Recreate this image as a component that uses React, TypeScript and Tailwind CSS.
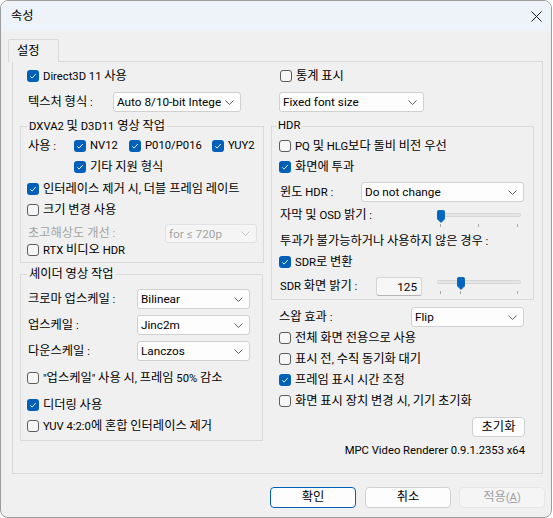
import React from "react";

// Hangul runs get their own size: the Latin face is set smaller than the Korean one
function T({ children }: { children: string }) {
  const parts = children.split(/([\u1100-\u11ff\u3131-\u318e\uac00-\ud7a3]+)/);
  return (
    <>
      {parts.map((p, i) =>
        i % 2 === 1 ? (
          <span key={i} className="text-[12.25px]">
            {p}
          </span>
        ) : (
          p
        )
      )}
    </>
  );
}

type CheckProps = { on?: boolean; label: string; className?: string };

function Box({ on }: { on?: boolean }) {
  if (on) {
    return (
      <span className="flex h-[12px] w-[12px] shrink-0 items-center justify-center rounded-[3px] bg-[#005fb8]">
        <svg width="8" height="8" viewBox="0 0 8 8">
          <path d="M1.3 4.3 3.1 6.1 6.8 2" fill="none" stroke="#fff" strokeWidth="0.9" />
        </svg>
      </span>
    );
  }
  return <span className="h-[12px] w-[12px] shrink-0 rounded-[3px] border border-[#5c5c5c] bg-[#f6f6f6]" />;
}

function CheckRow({ on, label, className = "" }: CheckProps) {
  return (
    <div className={`flex items-center gap-[4px] whitespace-nowrap ${className}`}>
      <Box on={on} />
      <span>
        <T>{label}</T>
      </span>
    </div>
  );
}

function Chevron({ color = "#5f5f5f" }: { color?: string }) {
  return (
    <svg width="9" height="5" viewBox="0 0 9 5" className="shrink-0">
      <path d="M0.5 0.5 4.5 4.5 8.5 0.5" fill="none" stroke={color} strokeWidth="1" />
    </svg>
  );
}

function Select({
  value,
  className = "",
  disabled,
}: {
  value: string;
  className?: string;
  disabled?: boolean;
}) {
  return (
    <div
      className={`flex items-center rounded-[3px] border pl-[3px] pr-[3px] ${
        disabled
          ? "border-[#e2e2e2] bg-[#f5f5f5] text-[#a3a3a3]"
          : "border-[#d0d0d0] bg-[#fdfdfd]"
      } ${className}`}
    >
      <span className="mr-[1px] min-w-0 flex-1 overflow-hidden whitespace-nowrap text-[11.75px]">{value}</span>
      <span className="flex w-[15px] shrink-0 justify-center">
        <Chevron color={disabled ? "#c2c2c2" : "#5f5f5f"} />
      </span>
    </div>
  );
}

function Slider({ pos, ticks }: { pos: number; ticks: number[] }) {
  return (
    <svg width="85" height="18" viewBox="0 0 85 18" className="shrink-0">
      <rect x="0.5" y="3.5" width="83" height="3" rx="1" fill="#e6e6e6" stroke="#d6d6d6" />
      <path
        d={`M${pos + 0.5} 1.5 Q${pos + 0.5} 0.5 ${pos + 1.5} 0.5 H${pos + 6.5} Q${pos + 7.5} 0.5 ${pos + 7.5} 1.5 V9 L${pos + 4} 12.5 L${pos + 0.5} 9 Z`}
        fill="#0067c0"
        stroke="#0058a8"
        strokeWidth="0.8"
      />
      {ticks.map((t) => (
        <rect key={t} x={t} y="14" width="1" height="3" fill="#a6a6a6" />
      ))}
    </svg>
  );
}

function Legend({ children, className = "" }: { children: string; className?: string }) {
  return (
    <legend className={`h-[14px] whitespace-nowrap leading-[14px] ${className}`}>
      <T>{children}</T>
    </legend>
  );
}

function Label({ children, className = "" }: { children: string; className?: string }) {
  return (
    <span className={`whitespace-nowrap ${className}`}>
      <T>{children}</T>
    </span>
  );
}

function Button({
  children,
  className = "",
}: {
  children: React.ReactNode;
  className?: string;
}) {
  return (
    <div className={`flex items-center justify-center rounded-[4px] border ${className}`}>{children}</div>
  );
}

export default function App() {
  return (
    <div className="h-[518px] w-[553px] bg-white text-[11.25px] leading-[16px] text-black [font-family:Roboto,'Noto_Sans_CJK_KR',sans-serif]">
      <div className="flex h-[518px] w-[552px] flex-col overflow-hidden rounded-[8px] border border-[#9c9c9c] bg-[#f0f0f0]">
        {/* title bar */}
        <div className="flex h-[30px] shrink-0 items-center justify-between bg-[#eef3f9] pl-[10px] pr-[9px]">
          <Label>속성</Label>
          <svg width="11" height="11" viewBox="0 0 11 11">
            <path d="M0.5 0.5 10.5 10.5 M10.5 0.5 0.5 10.5" stroke="#1a1a1a" strokeWidth="1" />
          </svg>
        </div>

        {/* tab header */}
        <div className="mt-[8px] flex pl-[7px]">
          <div className="relative z-10 -mb-[1px] flex h-[23px] w-[51px] items-center rounded-t-[2px] border border-b-0 border-[#d9d9d9] bg-[#f0f0f0] pl-[8px]">
            <Label>설정</Label>
          </div>
        </div>

        {/* tab panel */}
        <div className="ml-[11px] flex h-[413px] w-[531px] gap-[8px] border border-[#d9d9d9] pl-[7px] pt-[4px]">
          {/* left column */}
          <div className="flex w-[243px] flex-col">
            <CheckRow on label="Direct3D 11 사용" className="h-[20px] pl-[7px]" />
            <div className="mt-[6px] flex h-[20px] items-center pl-[8px]">
              <Label className="w-[85px]">텍스처 형식 :</Label>
              <Select value="Auto 8/10-bit Integer" className="h-[20px] w-[128px]" />
            </div>

            <fieldset className="mt-[7px] border border-[#dadada] px-[6px] pb-[5px]">
              <Legend className="px-[2px]">DXVA2 및 D3D11 영상 작업</Legend>
              <div className="flex flex-col">
                <div className="mt-[5px] flex h-[16px] items-center">
                  <Label className="w-[47px] pl-[1px]">사용 :</Label>
                  <CheckRow on label="NV12" className="w-[55px]" />
                  <CheckRow on label="P010/P016" className="w-[83px]" />
                  <CheckRow on label="YUY2" />
                </div>
                <CheckRow on label="기타 지원 형식" className="mt-[5px] h-[16px] pl-[47px]" />
                <CheckRow on label="인터레이스 제거 시, 더블 프레임 레이트" className="mt-[6px] h-[16px]" />
                <CheckRow label="크기 변경 사용" className="mt-[5px] h-[16px]" />
                <div className="mt-[6px] flex h-[19px] items-center text-[#a3a3a3]">
                  <Label className="w-[138px] pl-[1px]">초고해상도 개선 :</Label>
                  <Select disabled value="for ≤ 720p" className="h-[19px] w-[92px]" />
                </div>
                <CheckRow label="RTX 비디오 HDR" className="h-[14px]" />
              </div>
            </fieldset>

            <fieldset className="mt-[4px] border border-[#dadada] px-[6px] pb-[6px]">
              <Legend className="px-[2px]">셰이더 영상 작업</Legend>
              <div className="flex flex-col">
                <div className="mt-[8px] flex h-[20px] items-center">
                  <Label className="w-[110px] pl-[1px]">크로마 업스케일 :</Label>
                  <Select value="Bilinear" className="h-[20px] w-[113px]" />
                </div>
                <div className="mt-[6px] flex h-[20px] items-center">
                  <Label className="w-[110px] pl-[1px]">업스케일 :</Label>
                  <Select value="Jinc2m" className="h-[20px] w-[113px]" />
                </div>
                <div className="mt-[6px] flex h-[20px] items-center">
                  <Label className="w-[110px] pl-[1px]">다운스케일 :</Label>
                  <Select value="Lanczos" className="h-[20px] w-[113px]" />
                </div>
                <CheckRow label={'"업스케일" 사용 시, 프레임 50% 감소'} className="mt-[9px] h-[16px]" />
                <CheckRow on label="디더링 사용" className="mt-[11px] h-[16px]" />
                <CheckRow label="YUV 4:2:0에 혼합 인터레이스 제거" className="mt-[5px] h-[16px]" />
              </div>
            </fieldset>
          </div>

          {/* right column */}
          <div className="flex w-[263px] flex-col">
            <CheckRow label="통계 표시" className="h-[20px] pl-[9px]" />
            <div className="mt-[6px] flex h-[20px] pl-[8px]">
              <Select value="Fixed font size" className="h-[20px] w-[145px]" />
            </div>

            <fieldset className="mt-[7px] border border-[#dadada] px-[7px] pb-[2px]">
              <Legend className="-ml-[2px] px-[1px]">HDR</Legend>
              <div className="flex flex-col">
                <CheckRow label="PQ 및 HLG보다 돌비 비전 우선" className="mt-[5px] h-[16px]" />
                <CheckRow on label="화면에 투과" className="mt-[5px] h-[16px]" />
                <div className="mt-[7px] flex h-[20px] items-center">
                  <Label className="w-[82px] pl-[1px]">윈도 HDR :</Label>
                  <Select value="Do not change" className="h-[20px] w-[163px]" />
                </div>
                <div className="mt-[4px] flex h-[22px] items-start">
                  <Label className="w-[158px] pl-[1px] leading-[18px]">자막 및 OSD 밝기 :</Label>
                  <div className="mt-[4px]">
                    <Slider pos={0} ticks={[3, 41, 80]} />
                  </div>
                </div>
                <div className="mt-[5px] flex h-[16px] items-center pl-[1px]">
                  <Label>투과가 불가능하거나 사용하지 않은 경우 :</Label>
                </div>
                <CheckRow on label="SDR로 변환" className="mt-[5px] h-[16px]" />
                <div className="mt-[6px] flex h-[21px] items-start">
                  <Label className="w-[97px] pl-[1px] leading-[20px]">SDR 화면 밝기 :</Label>
                  <div className="mt-[1px] flex h-[19px] w-[46px] items-center justify-end rounded-[3px] border border-[#d6d6d6] border-b-[#b5b5b5] bg-[#f7f7f7] pr-[4px] text-[11.75px]">
                    125
                  </div>
                  <div className="ml-[15px] mt-[1px]">
                    <Slider pos={20} ticks={[3, 23, 80]} />
                  </div>
                </div>
              </div>
            </fieldset>

            <div className="mt-[7px] flex h-[20px] items-center pl-[8px]">
              <Label className="w-[132px]">스왑 효과 :</Label>
              <Select value="Flip" className="h-[20px] w-[113px]" />
            </div>
            <CheckRow label="전체 화면 전용으로 사용" className="mt-[3px] h-[16px] pl-[8px]" />
            <CheckRow label="표시 전, 수직 동기화 대기" className="mt-[5px] h-[16px] pl-[8px]" />
            <CheckRow on label="프레임 표시 시간 조정" className="mt-[5px] h-[16px] pl-[8px]" />
            <CheckRow label="화면 표시 장치 변경 시, 기기 초기화" className="mt-[5px] h-[16px] pl-[8px]" />
            <div className="mt-[8px] flex justify-end pr-[9px]">
              <Button className="h-[20px] w-[53px] border-[#d0d0d0] bg-[#fdfdfd]">
                <Label>초기화</Label>
              </Button>
            </div>
            <div className="mt-[7px] flex h-[14px] items-center justify-end whitespace-nowrap pr-[9px]">
              MPC Video Renderer 0.9.1.2353 x64
            </div>
          </div>
        </div>

        {/* dialog buttons */}
        <div className="mt-[13px] flex justify-end pr-[6px]">
          <Button className="h-[21px] w-[86px] border-[#005fb8] bg-[#fdfdfd]">
            <Label>확인</Label>
          </Button>
          <Button className="ml-[9px] h-[21px] w-[86px] border-[#d0d0d0] bg-[#fdfdfd]">
            <Label>취소</Label>
          </Button>
          <Button className="ml-[8px] h-[21px] w-[86px] border-[#e6e6e6] bg-[#f5f5f5] text-[#a0a0a0]">
            <span>
              <T>적용</T>(<span className="underline">A</span>)
            </span>
          </Button>
        </div>
      </div>
    </div>
  );
}
